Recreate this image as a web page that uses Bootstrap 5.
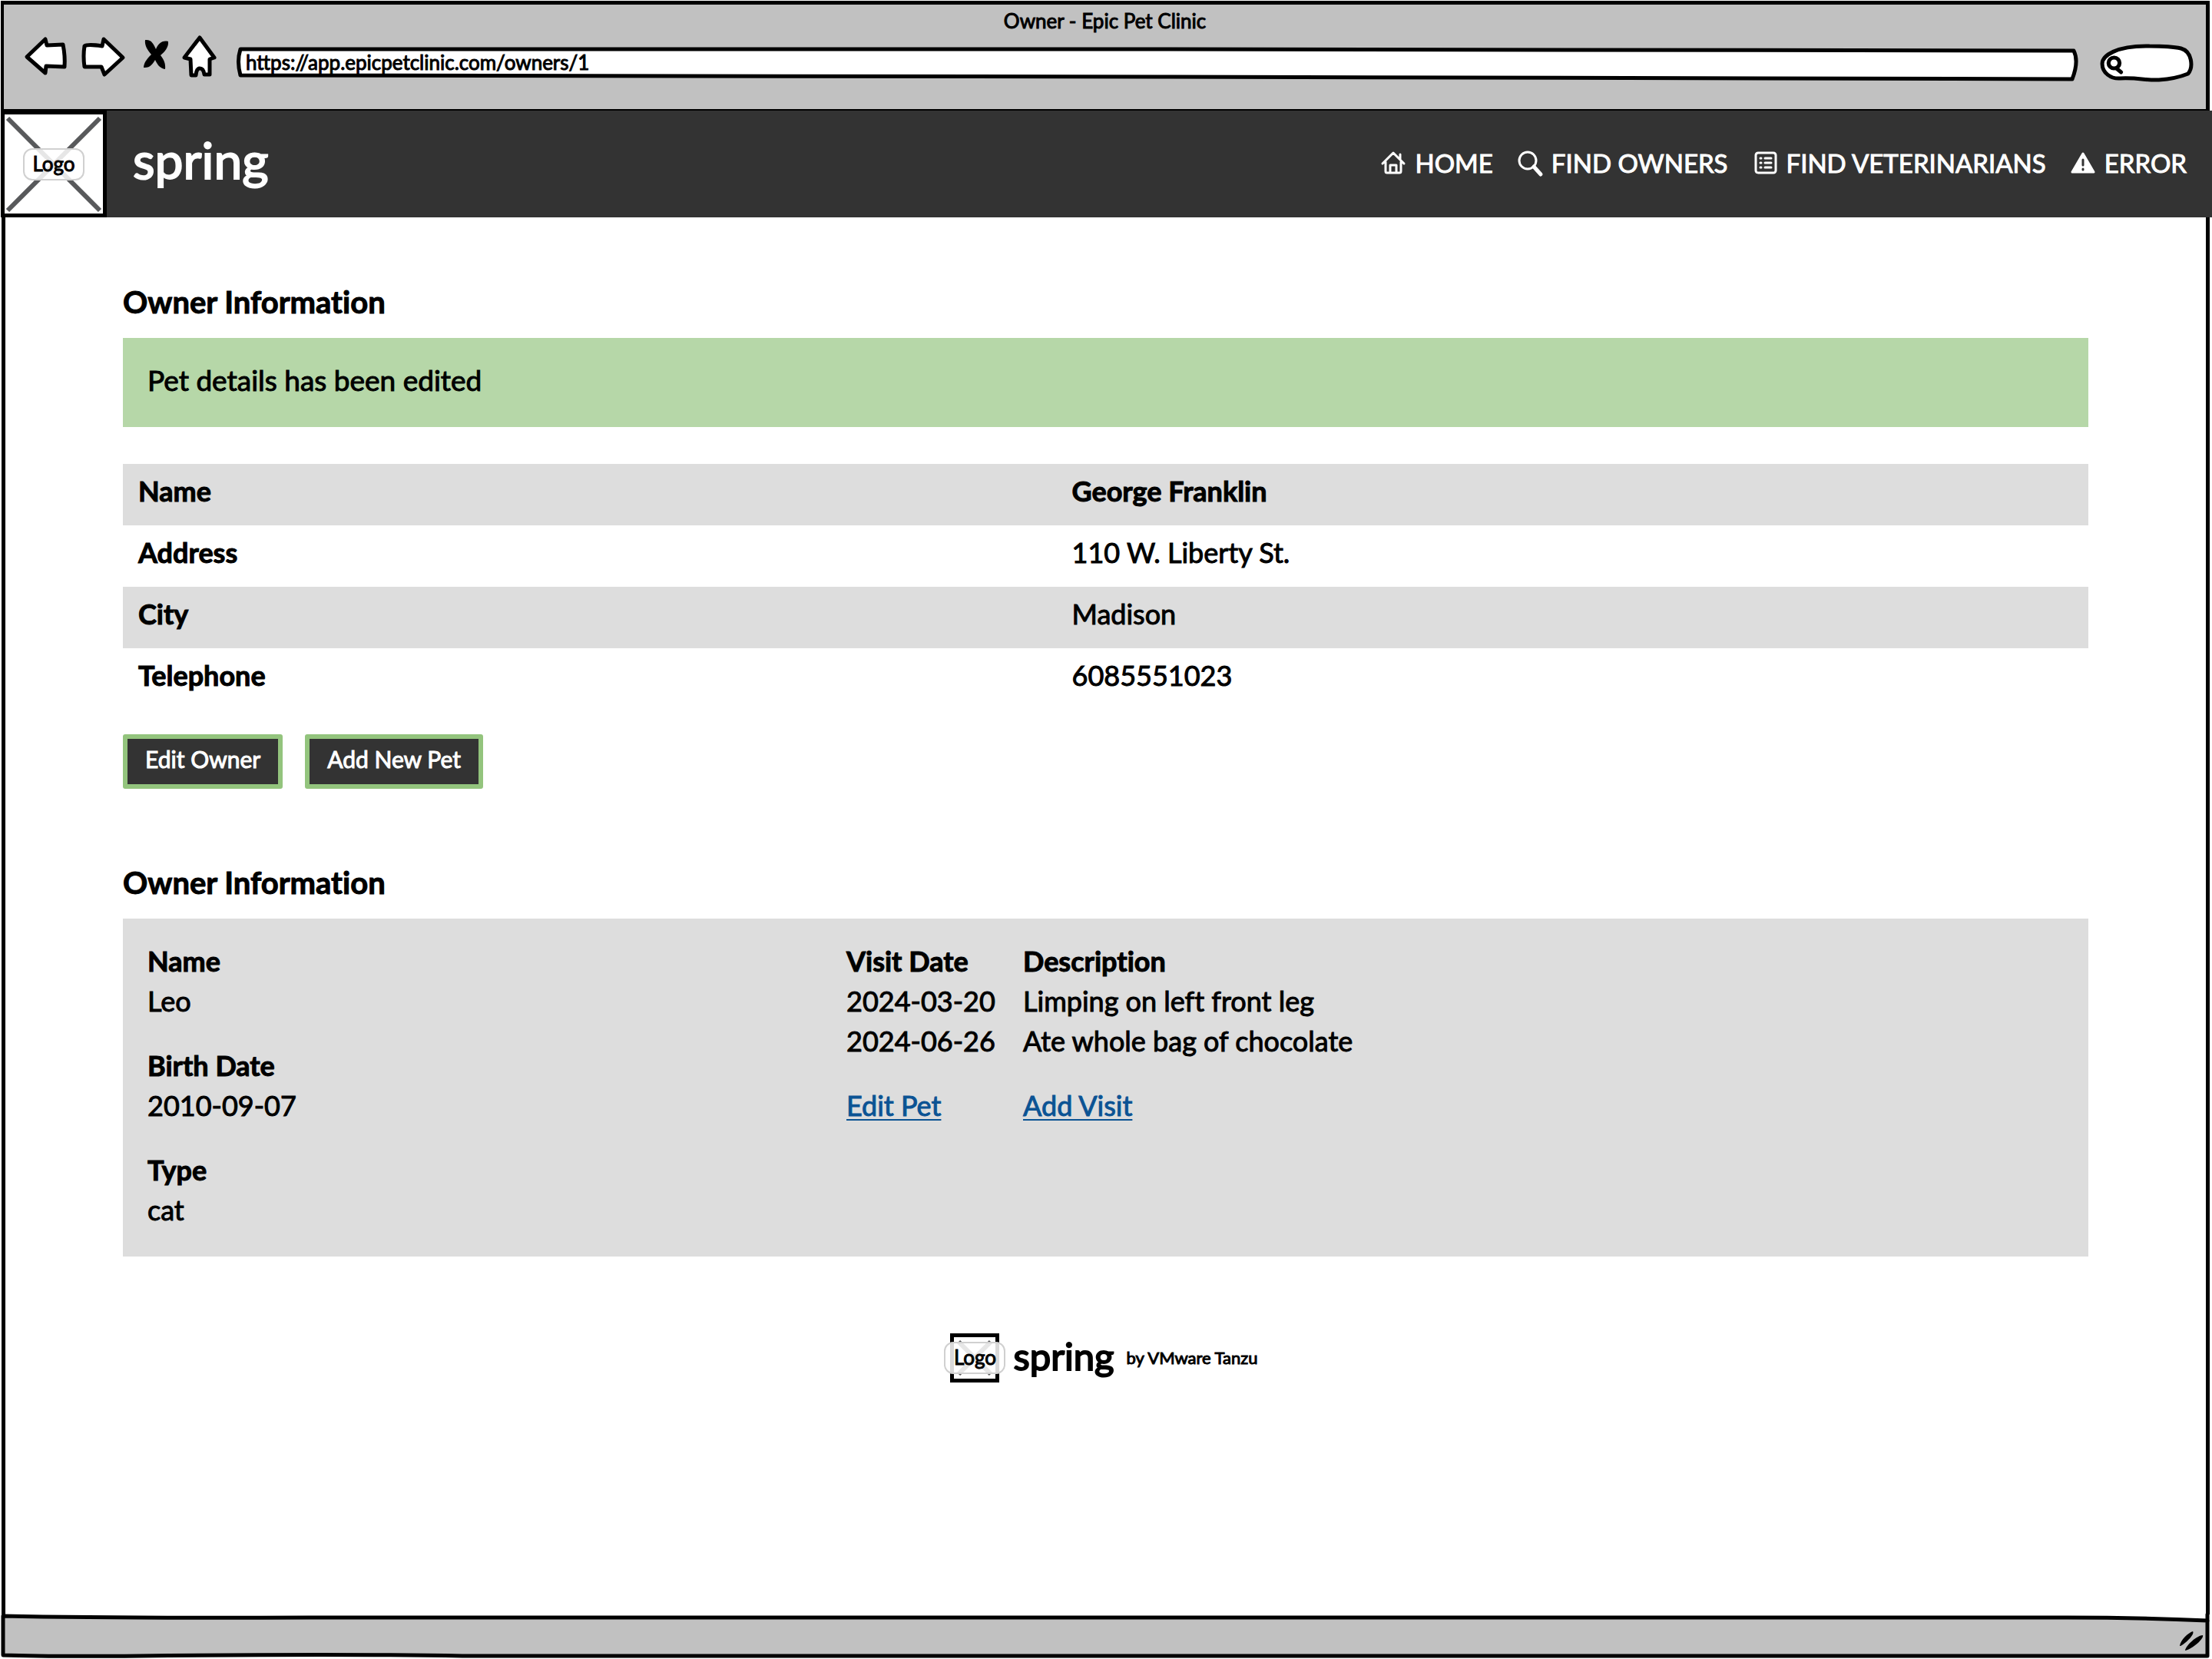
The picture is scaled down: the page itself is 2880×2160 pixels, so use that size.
<!DOCTYPE html>
<html lang="en">
<head>
<meta charset="utf-8">
<meta name="viewport" content="width=device-width, initial-scale=1">
<title>Owner - Epic Pet Clinic</title>
<link href="https://cdn.jsdelivr.net/npm/bootstrap@5.3.0/dist/css/bootstrap.min.css" rel="stylesheet">
<style>
  body { font-family: Lato, "Liberation Sans", sans-serif; font-size: 36px; line-height: 52px; font-variant-ligatures: none; color: #000; background: #fff; -webkit-text-stroke: 1px currentColor; }
  svg { display: block; overflow: visible; flex: none; }
  .ink { fill: #fff; stroke: #000; stroke-width: 5px; stroke-linejoin: round; stroke-linecap: round; }
  .stretch { position: absolute; inset: 0; width: 100%; height: 100%; }
  .stretch path { vector-effect: non-scaling-stroke; }

  /* browser window */
  .chrome { margin: 1px 3px 0 1px; background: #c1c1c1; border: 5px solid #000; border-left-width: 4px; border-bottom-width: 2px; font-size: 26px; line-height: 32px; }
  .chrome-title { padding-top: 5px; }
  .toolbar { gap: 20px; height: 99px; padding: 0 16px 0 27px; }
  .tool { padding: 0; border: 0; background: none; }
  .address { height: 46px; margin-top: 17px; }
  .address input { position: relative; width: 100%; height: 40px; padding: 1px 12px 0; border: 0; background: none; color: #000; line-height: 32px; outline: 0; }
  .finder { width: 122px; height: 50px; margin: 14px 0 0 6px; }
  .finder input { position: relative; width: 78px; height: 40px; margin-left: 34px; border: 0; background: none; outline: 0; }
  .status { height: 57px; margin: 0 3px 1px 2px; }
  .grip { position: absolute; right: 8px; bottom: 10px; }
  .window-body { margin: 0 3px 0 2px; border: 5px solid #000; border-width: 0 5px; padding: 86px 153px 0; }

  /* site bar */
  .site-bar { height: 139px; margin-left: 1px; padding: 0 33px 0 0; background: #333; color: #fff; }
  .logo-box { position: relative; flex: none; display: flex; align-items: center; justify-content: center; background: #fff; border: 5px solid #000; color: #000; font-size: 26px; }
  .logo-lg { width: 138px; height: 139px; }
  .logo-sm { width: 64px; height: 64px; }
  .logo-tag { position: relative; flex: none; width: 80px; height: 42px; text-align: center; background: rgba(255,255,255,.85); border: 2px solid #d0d0d0; border-radius: 12px; line-height: 36px; }
  .brand-lg { font-size: 66px; line-height: 64px; margin-left: 34px; padding-bottom: 12px; color: #fff; -webkit-text-stroke: 2px currentColor; }
  .brand-sm { font-size: 49px; line-height: 58px; margin-left: 18px; padding-bottom: 6px; -webkit-text-stroke: 2px currentColor; }
  .site-links { gap: 32px; padding-bottom: 4px; }
  .site-links a { display: flex; align-items: center; gap: 12px; color: #fff; text-decoration: none; font-size: 33px; line-height: 32px; }
  .site-links svg { fill: none; stroke: currentColor; stroke-width: 3px; stroke-linejoin: round; stroke-linecap: round; }

  /* page */
  .section-title { font-size: 40px; line-height: 48px; font-weight: 700; margin: 0 0 23px; }
  .notice { background: #b6d7a8; padding: 29px 32px 35px; margin-bottom: 48px; font-size: 37px; }
  .facts { width: 100%; table-layout: fixed; }
  .facts th, .facts td { padding: 9px 20px 19px; }
  .facts th { width: 47.5%; }
  .facts tr:nth-child(odd) { background: #ddd; }
  .actions { gap: 29px; margin: 32px 0 98px; }
  .btn-sketch { background: #333; color: #fff; border: 6px solid #93c47d; border-radius: 3px; padding: 8px 23px 15px; font-size: 30px; line-height: 36px; -webkit-text-stroke: 1px currentColor; }
  .btn-sketch:hover { background: #444; color: #fff; border-color: #93c47d; }
  .pet { background: #ddd; padding: 29px 32px 35px; }
  .pet-facts { flex: 0 0 910px; }
  .pet-facts dd { margin-bottom: 32px; }
  .pet-facts dd:last-child { margin-bottom: 0; }
  .visits th, .visits td { padding: 0; }
  .visits th:first-child, .visits td:first-child { width: 230px; }
  .visits tfoot td { padding-top: 32px; }
  .visits a { color: #0b5394; text-decoration-thickness: 2px; text-underline-offset: 4px; text-decoration-skip-ink: none; }
  .credit { margin-top: 100px; padding-right: 4px; }
  .credit-by { font-size: 22px; line-height: 64px; margin-left: 16px; }
</style>
</head>
<body class="d-flex flex-column min-vh-100">

<header class="chrome">
  <div class="chrome-title text-center">Owner - Epic Pet Clinic</div>
  <div class="toolbar d-flex align-items-start">
    <button class="tool" type="button" aria-label="Back"><svg class="ink" width="54" height="62"><path d="M3 31L27 8L29 16L50 15Q53 30 52 44L28 43L27 52Z"/></svg></button>
    <button class="tool" type="button" aria-label="Forward"><svg class="ink" width="57" height="62"><path d="M4 17Q8 14 27 17L29 8L54 32L30 54L26 44L4 44Q2 30 4 17Z"/></svg></button>
    <button class="tool" type="button" aria-label="Stop"><svg width="35" height="62"><path d="M6 9C14 8 17 14 20 21C23 14 28 9 36 11C37 18 31 25 26 29C30 34 33 40 32 47C25 46 22 41 19 35C16 40 12 46 4 45C4 38 10 32 14 28C9 22 5 16 6 9Z"/></svg></button>
    <button class="tool" type="button" aria-label="Home"><svg class="ink" width="50" height="62"><path d="M22 6L41 32L35 34L35 54L28 54Q27 46 22 46Q18 46 17 55L11 55L10 34L2 32Z"/></svg></button>
    <div class="address position-relative flex-grow-1">
      <svg class="ink stretch" viewBox="0 0 2397 46" preserveAspectRatio="none"><path d="M5 4L1200 4L2389 6Q2396 20 2387 43L1200 40L5 38Q0 20 5 4Z"/></svg>
      <input type="text" aria-label="Address" value="https://app.epicpetclinic.com/owners/1">
    </div>
    <div class="finder position-relative">
      <svg class="ink stretch" viewBox="0 0 119 50" preserveAspectRatio="none"><path d="M63 3C20 2 3 16 3 26C3 38 14 46 26 45C50 44 60 48 75 47C90 46 100 44 112 39C119 30 117 10 103 6C90 3 75 3 63 3Z"/><circle cx="18" cy="25" r="7"/><path d="M21 32L27 37"/></svg>
      <input type="search" aria-label="Search">
    </div>
  </div>
</header>

<nav class="site-bar d-flex align-items-center">
  <a class="logo-box logo-lg text-decoration-none" href="#">
    <svg class="stretch" viewBox="0 0 128 129" stroke="#58595b" stroke-width="6"><path d="M4 5L124 125M124 5L4 125"/></svg>
    <span class="logo-tag">Logo</span>
  </a>
  <a class="brand-lg text-decoration-none" href="#">spring</a>
  <div class="site-links d-flex ms-auto">
    <a href="#"><svg width="32" height="32"><path d="M2 17L16 3L30 17M25 11V5M6 15V27Q6 29 8 29H24Q26 29 26 27V15M12 29V19H20V29"/></svg>HOME</a>
    <a href="#"><svg width="32" height="32"><circle cx="13" cy="13" r="11"/><path d="M21 21L30 31" stroke-width="5"/></svg>FIND OWNERS</a>
    <a href="#"><svg width="32" height="32"><rect x="4" y="3" width="26" height="26" rx="3"/><path d="M10 10h1M10 16h1M10 22h1M16 10h8M16 16h8M16 22h8"/></svg>FIND VETERINARIANS</a>
    <a href="#"><svg width="32" height="32"><path fill="#fff" d="M16 4L30 28H2Z"/><path stroke="#333" d="M16 12v7M16 24v1"/></svg>ERROR</a>
  </div>
</nav>

<main class="window-body flex-grow-1">
  <h1 class="section-title">Owner Information</h1>
  <div class="notice" role="status">Pet details has been edited</div>
  <table class="facts">
    <tbody>
      <tr><th scope="row">Name</th><td class="fw-bold">George Franklin</td></tr>
      <tr><th scope="row">Address</th><td>110 W. Liberty St.</td></tr>
      <tr><th scope="row">City</th><td>Madison</td></tr>
      <tr><th scope="row">Telephone</th><td>6085551023</td></tr>
    </tbody>
  </table>
  <div class="actions d-flex">
    <button class="btn btn-sketch" type="button">Edit Owner</button>
    <button class="btn btn-sketch" type="button">Add New Pet</button>
  </div>

  <h2 class="section-title">Owner Information</h2>
  <section class="pet d-flex align-items-start">
    <dl class="pet-facts mb-0">
      <dt>Name</dt><dd>Leo</dd>
      <dt>Birth Date</dt><dd>2010-09-07</dd>
      <dt>Type</dt><dd>cat</dd>
    </dl>
    <table class="visits">
      <thead><tr><th scope="col">Visit Date</th><th scope="col">Description</th></tr></thead>
      <tbody>
        <tr><td>2024-03-20</td><td>Limping on left front leg</td></tr>
        <tr><td>2024-06-26</td><td>Ate whole bag of chocolate</td></tr>
      </tbody>
      <tfoot><tr><td><a href="#">Edit Pet</a></td><td><a href="#">Add Visit</a></td></tr></tfoot>
    </table>
  </section>

  <div class="credit d-flex justify-content-center align-items-center">
    <span class="logo-box logo-sm">
      <svg class="stretch" viewBox="0 0 54 54" stroke="#58595b" stroke-width="6"><path d="M6 6L48 48M48 6L6 48"/></svg>
      <span class="logo-tag">Logo</span>
    </span>
    <span class="brand-sm">spring</span>
    <span class="credit-by">by VMware Tanzu</span>
  </div>
</main>

<footer class="status position-relative">
  <svg class="ink stretch" viewBox="0 0 2875 57" preserveAspectRatio="none"><path style="fill:#c1c1c1" d="M2 2Q140 5 400 4L2690 4Q2780 4 2872 8L2872 54L600 54Q440 51 180 54Q60 55 2 53Z"/><path d="M2872 8V0"/></svg>
  <svg class="grip" width="32" height="26"><path d="M1 20C2 12 12 3 18 1C21 4 10 16 2 20ZM8 26C9 19 24 6 31 6C33 10 18 24 8 26Z"/></svg>
</footer>

<script src="https://cdn.jsdelivr.net/npm/bootstrap@5.3.0/dist/js/bootstrap.bundle.min.js"></script>
</body>
</html>
